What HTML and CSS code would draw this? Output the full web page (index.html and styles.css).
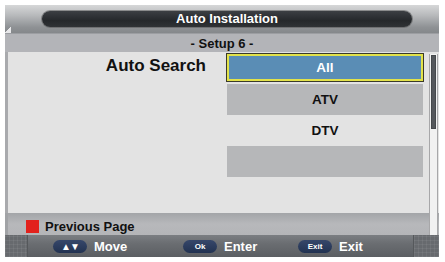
FILE: index.html
```html
<!DOCTYPE html>
<html>
<head>
<meta charset="utf-8">
<link rel="stylesheet" href="styles.css">
</head>
<body>
<div class="frame">
  <div class="header">
    <div class="corner-l"></div>
    <div class="pill-title">Auto Installation</div>
  </div>
  <div class="subheader">- Setup 6 -</div>
  <div class="content">
    <div class="label">Auto Search</div>
    <div class="list">
      <div class="row selected">All</div>
      <div class="row gray">ATV</div>
      <div class="row">DTV</div>
      <div class="row gray"></div>
    </div>
    <div class="scroll"><div class="thumb"></div></div>
  </div>
  <div class="prev">
    <span class="red"></span><span class="prev-text">Previous Page</span>
    <div class="scroll-tail"></div>
  </div>
  <div class="bottom">
    <div class="grid-sq"></div>
    <div class="keys">
      <div class="key"><span class="kbtn arrows">&#9650;&#9660;</span><span class="klabel">Move</span></div>
      <div class="key"><span class="kbtn">Ok</span><span class="klabel">Enter</span></div>
      <div class="key"><span class="kbtn">Exit</span><span class="klabel">Exit</span></div>
    </div>
    <div class="grid-sq right"></div>
  </div>
</div>
</body>
</html>
```
FILE: styles.css
```css
html, body { margin: 0; padding: 0; background: #ffffff; }
body { font-family: "Liberation Sans", Arial, sans-serif; font-weight: bold; }
.frame {
  margin: 5px 0 0 5px;
  width: 434px;
  height: 252px;
  display: flex;
  flex-direction: column;
  background: #e3e3e3;
}
.header {
  height: 28px;
  position: relative;
  display: flex;
  align-items: center;
  justify-content: center;
  background: linear-gradient(#d6d7d8 0%, #b9bbbd 35%, #8e9194 80%, #85888b 100%);
}
.corner-l {
  position: absolute;
  left: 0; bottom: 0;
  width: 6px; height: 6px;
  background: linear-gradient(135deg, transparent 50%, #e8e8ea 50%);
}
.pill-title {
  margin-left: 10px;
  width: 370px;
  height: 16px;
  border-radius: 8px;
  background: linear-gradient(#3c3f43, #25282b 60%, #303336);
  box-shadow: 0 0 0 1px rgba(80,80,80,0.5);
  color: #ffffff;
  font-size: 13px;
  line-height: 16px;
  text-align: center;
}
.subheader {
  height: 19px;
  background: #b3b4b8;
  color: #111;
  font-size: 13px;
  line-height: 20px;
  text-align: center;
  border-top: 1px solid #9c9ea2;
  box-sizing: border-box;
}
.content {
  height: 161px;
  display: flex;
  border-left: 3px solid #a9aaad;
  box-sizing: border-box;
}
.label {
  width: 198px;
  font-size: 17px;
  color: #111;
  text-align: right;
  padding-top: 4px;
}
.list {
  margin-left: 20px;
  width: 198px;
  padding-top: 1px;
  display: flex;
  flex-direction: column;
}
.row {
  height: 31px;
  margin: 0 1px;
  font-size: 13.5px;
  color: #111;
  line-height: 31px;
  text-align: center;
}
.row.gray { background: #b6b7b9; }
.row.selected {
  margin: 0 0 2px 0;
  height: 29px;
  line-height: 23px;
  box-sizing: border-box;
  border: 3px solid #e2e24a;
  outline: 1px solid #3a3a2a;
  outline-offset: -1px;
  background: #5a8db5;
  color: #ffffff;
}
.scroll {
  margin-left: 5px;
  margin-top: 2px;
  width: 9px;
  background: #f1f1f1;
  border-left: 1px solid #a7a7a9;
  border-right: 1px solid #a7a7a9;
  box-sizing: border-box;
  padding: 1px;
}
.thumb {
  height: 74px;
  background: #55585c;
  border: 1px solid #45484b;
  box-sizing: border-box;
}
.prev {
  height: 22px;
  display: flex;
  align-items: center;
  background: linear-gradient(#a3a5a8 0%, #b7b8bb 50%, #b4b5b8 100%);
  border-left: 3px solid #a1a3a6;
  box-sizing: border-box;
  position: relative;
}
.red {
  width: 13px; height: 13px;
  background: #e2211c;
  margin-left: 18px;
  margin-top: 4px;
}
.prev-text {
  margin-left: 6px;
  margin-top: 4px;
  font-size: 13px;
  color: #111;
}
.scroll-tail {
  position: absolute;
  right: 1px; top: 0; bottom: 0;
  width: 9px;
  background: #f1f1f1;
  border-left: 1px solid #a7a7a9;
  border-right: 1px solid #a7a7a9;
  box-sizing: border-box;
}
.bottom {
  height: 22px;
  display: flex;
  background: linear-gradient(#7b7e82 0%, #6a6d71 40%, #5b5e62 100%);
}
.grid-sq {
  width: 22px;
  background:
    repeating-linear-gradient(90deg, rgba(255,255,255,0.06) 0 1px, transparent 1px 4px),
    repeating-linear-gradient(0deg, rgba(255,255,255,0.06) 0 1px, transparent 1px 4px),
    #676a6e;
  border-right: 1px solid #55585b;
}
.grid-sq.right { width: 25px; border-right: none; border-left: 1px solid #55585b; }
.keys {
  flex: 1;
  display: flex;
  align-items: center;
  padding-left: 25px;
}
.key { display: flex; align-items: center; }
.key:nth-child(1) { width: 130px; }
.key:nth-child(2) { width: 115px; }
.kbtn {
  width: 34px;
  height: 13px;
  border-radius: 7px;
  background: linear-gradient(#36476a, #223251);
  color: #ffffff;
  font-size: 8px;
  line-height: 13px;
  text-align: center;
}
.kbtn.arrows { font-size: 10px; letter-spacing: -1px; }
.klabel {
  margin-left: 7px;
  font-size: 13px;
  color: #ffffff;
}
```
